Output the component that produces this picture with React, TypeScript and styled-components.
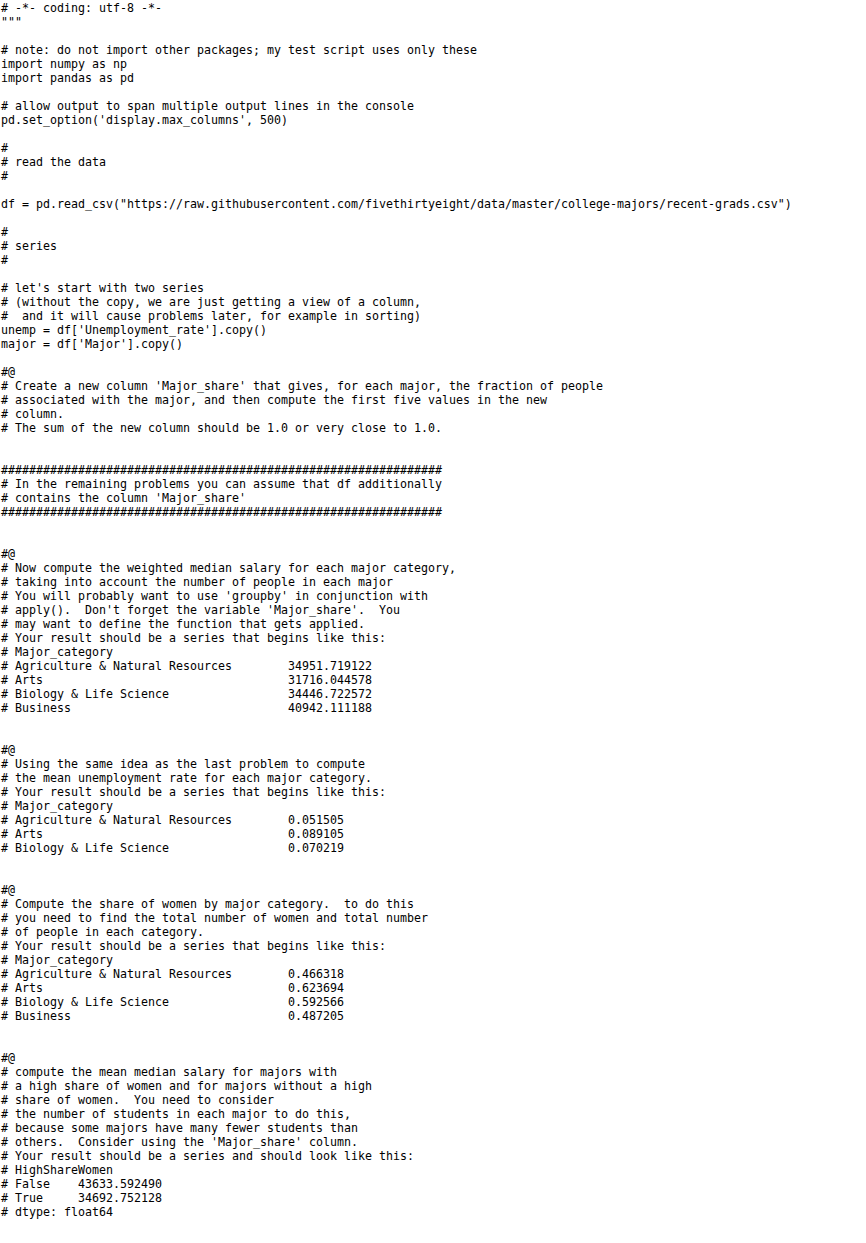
import React from "react";
import styled, { createGlobalStyle } from "styled-components";

const Global = createGlobalStyle`
  html, body { margin: 0; padding: 0; background: #ffffff; }
`;

const Editor = styled.pre`
  margin: 0;
  padding: 1px 0 0 1px;
  font-family: "DejaVu Sans Mono", "Liberation Mono", monospace;
  font-size: 11.63px;
  line-height: 14px;
  color: #000000;
  background: #ffffff;
  white-space: pre;
`;

const Line = styled.div`
  height: 14px;
`;

const hashes = "#".repeat(63);

const pad = (label: string, col: number) => label + " ".repeat(Math.max(1, col - label.length));

const lines: string[] = [
  "# -*- coding: utf-8 -*-",
  '"""',
  "",
  "# note: do not import other packages; my test script uses only these",
  "import numpy as np",
  "import pandas as pd",
  "",
  "# allow output to span multiple output lines in the console",
  "pd.set_option('display.max_columns', 500)",
  "",
  "#",
  "# read the data",
  "#",
  "",
  'df = pd.read_csv("https://raw.githubusercontent.com/fivethirtyeight/data/master/college-majors/recent-grads.csv")',
  "",
  "#",
  "# series",
  "#",
  "",
  "# let's start with two series",
  "# (without the copy, we are just getting a view of a column,",
  "#  and it will cause problems later, for example in sorting)",
  "unemp = df['Unemployment_rate'].copy()",
  "major = df['Major'].copy()",
  "",
  "#@",
  "# Create a new column 'Major_share' that gives, for each major, the fraction of people",
  "# associated with the major, and then compute the first five values in the new",
  "# column.",
  "# The sum of the new column should be 1.0 or very close to 1.0.",
  "",
  "",
  hashes,
  "# In the remaining problems you can assume that df additionally",
  "# contains the column 'Major_share'",
  hashes,
  "",
  "",
  "#@",
  "# Now compute the weighted median salary for each major category,",
  "# taking into account the number of people in each major",
  "# You will probably want to use 'groupby' in conjunction with",
  "# apply().  Don't forget the variable 'Major_share'.  You",
  "# may want to define the function that gets applied.",
  "# Your result should be a series that begins like this:",
  "# Major_category",
  pad("# Agriculture & Natural Resources", 41) + "34951.719122",
  pad("# Arts", 41) + "31716.044578",
  pad("# Biology & Life Science", 41) + "34446.722572",
  pad("# Business", 41) + "40942.111188",
  "",
  "",
  "#@",
  "# Using the same idea as the last problem to compute",
  "# the mean unemployment rate for each major category.",
  "# Your result should be a series that begins like this:",
  "# Major_category",
  pad("# Agriculture & Natural Resources", 41) + "0.051505",
  pad("# Arts", 41) + "0.089105",
  pad("# Biology & Life Science", 41) + "0.070219",
  "",
  "",
  "#@",
  "# Compute the share of women by major category.  to do this",
  "# you need to find the total number of women and total number",
  "# of people in each category.",
  "# Your result should be a series that begins like this:",
  "# Major_category",
  pad("# Agriculture & Natural Resources", 41) + "0.466318",
  pad("# Arts", 41) + "0.623694",
  pad("# Biology & Life Science", 41) + "0.592566",
  pad("# Business", 41) + "0.487205",
  "",
  "",
  "#@",
  "# compute the mean median salary for majors with",
  "# a high share of women and for majors without a high",
  "# share of women.  You need to consider",
  "# the number of students in each major to do this,",
  "# because some majors have many fewer students than",
  "# others.  Consider using the 'Major_share' column.",
  "# Your result should be a series and should look like this:",
  "# HighShareWomen",
  "# False    43633.592490",
  "# True     34692.752128",
  "# dtype: float64",
];

export default function App() {
  return (
    <>
      <Global />
      <Editor>
        {lines.map((text, i) => (
          <Line key={i}>{text}</Line>
        ))}
      </Editor>
    </>
  );
}
